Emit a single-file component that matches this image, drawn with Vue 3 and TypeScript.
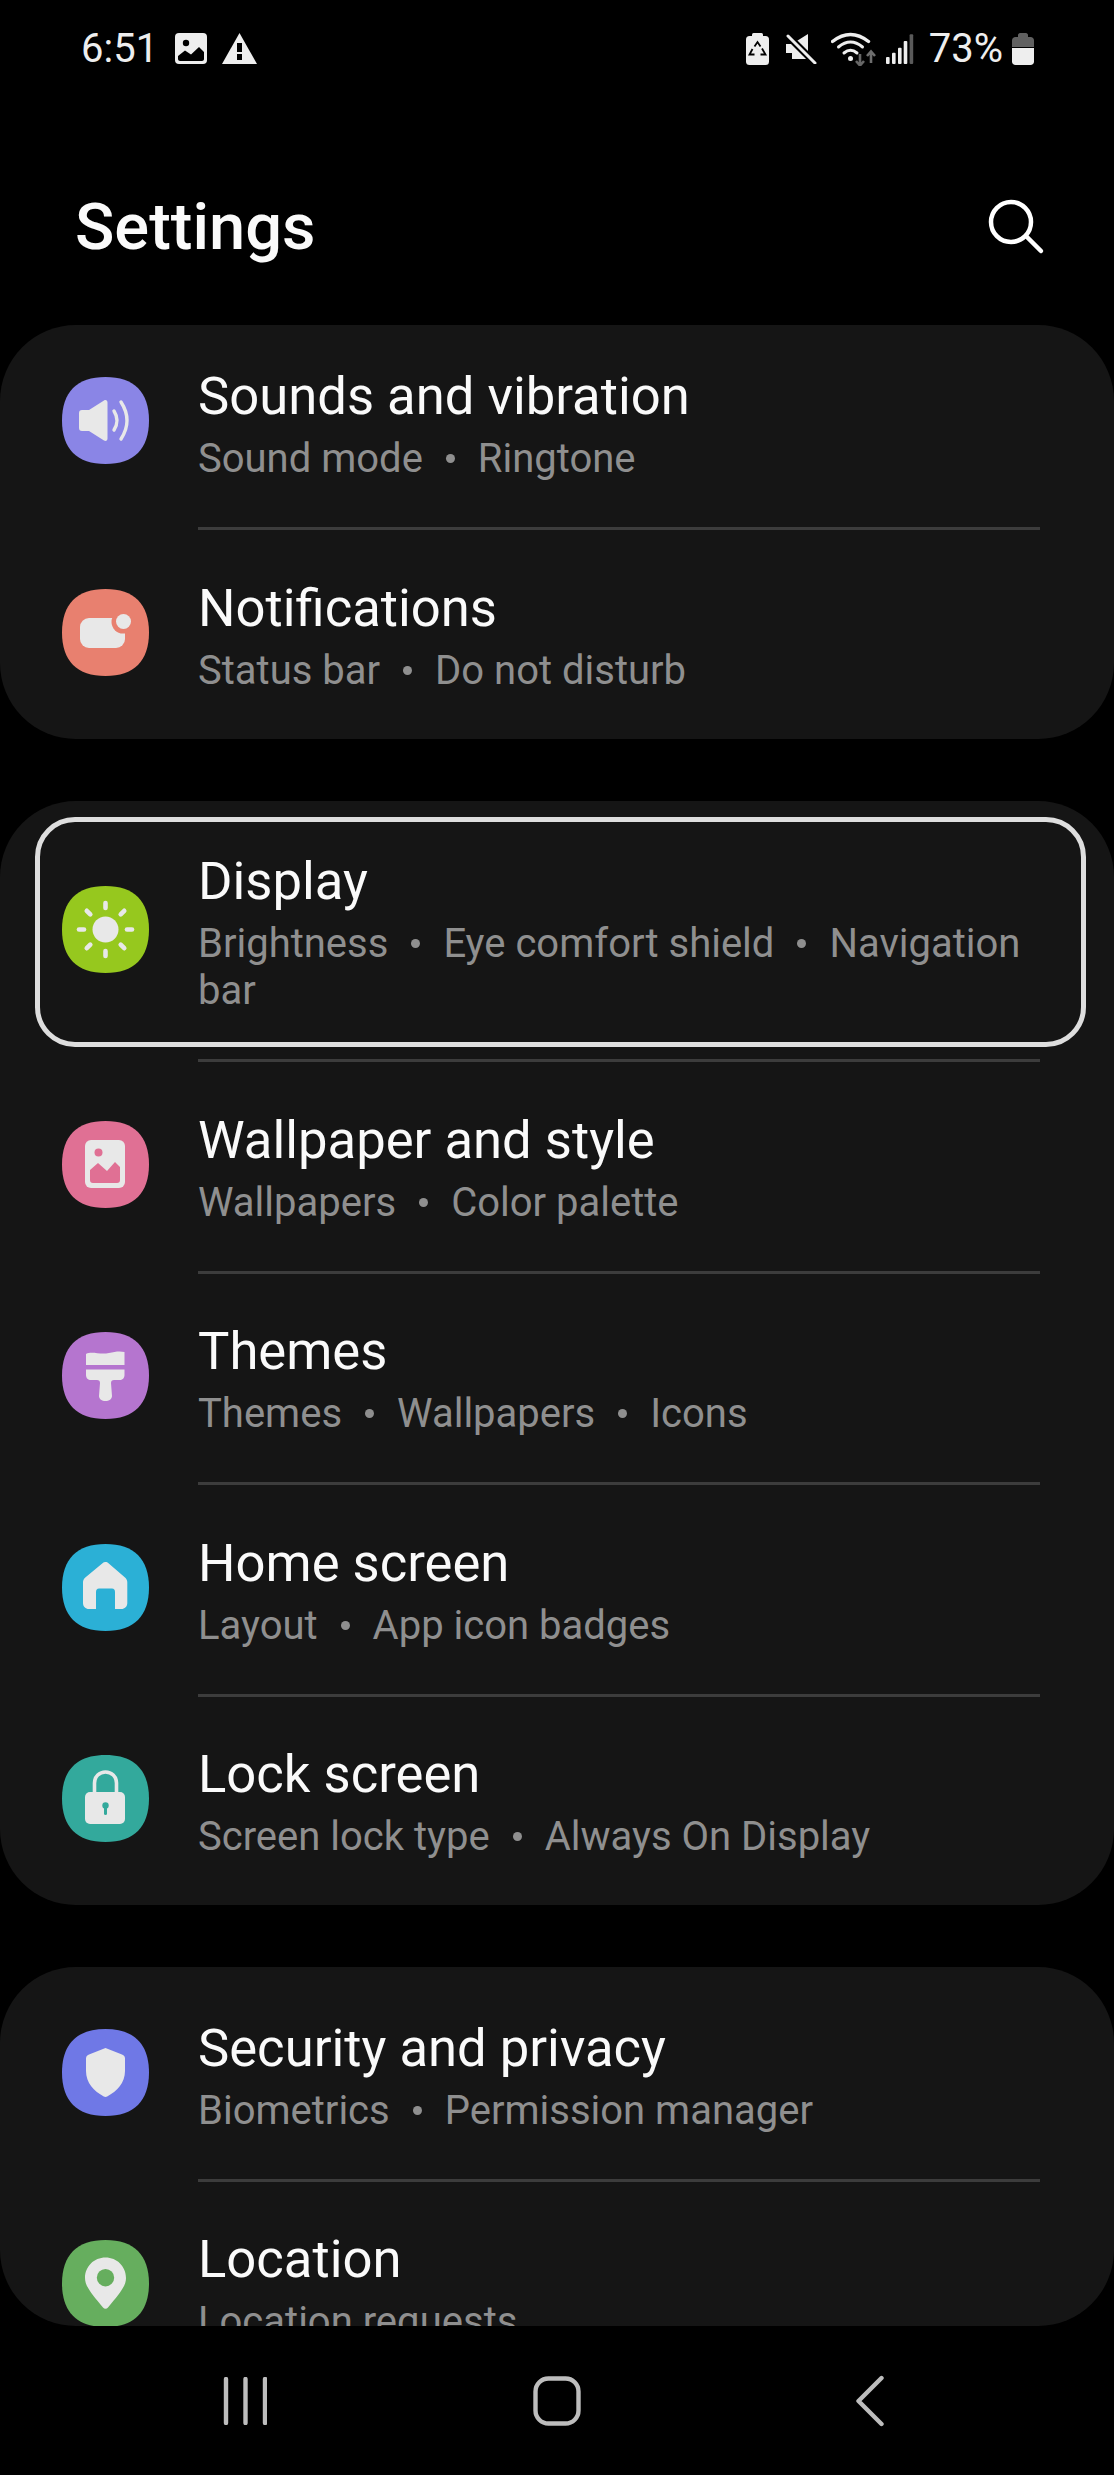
<template>
  <div class="phone">
    <!-- status bar -->
    <div class="status">
      <span class="clock">6:51</span>
      <svg class="st-image" width="32" height="31" viewBox="0 0 32 31">
        <rect width="32" height="31" rx="4" fill="#eee" />
        <circle cx="11" cy="10" r="3.2" fill="#000" />
        <path d="M3 23 L10 17.5 L16 21.5 L24 14 L29 19 V26 c0 1 -1 2 -2 2 H5 c-1 0 -2 -1 -2 -2 Z" fill="#000" />
      </svg>
      <svg class="st-warn" width="35" height="31" viewBox="0 0 35 31">
        <path d="M17.5 0 L35 31 H0 Z" fill="#eee" />
        <rect x="15" y="10" width="5" height="9" fill="#000" />
        <rect x="15" y="21" width="5" height="6" fill="#000" />
      </svg>
      <div class="status-right">
        <svg width="23" height="32" viewBox="0 0 23 32">
          <rect x="6" y="0" width="11" height="5" rx="1.5" fill="#eee" />
          <rect x="0" y="3" width="23" height="29" rx="3.5" fill="#eee" />
          <path d="M8.5 13.5 L11.5 9 L14.5 13.5 M16 15.5 L19.5 21.5 H14.5 M8.5 21.5 H3.5 L6.5 16" fill="none" stroke="#000" stroke-width="1.8" />
        </svg>
        <svg width="31" height="30" viewBox="0 0 31 30">
          <path d="M0 10 h6 L22 0 V25 H6 L6 19 H0 Z" fill="#eee" />
          <path d="M2 2 L29 29" stroke="#000" stroke-width="7" />
          <path d="M2 2 L29 29" stroke="#eee" stroke-width="3" stroke-linecap="round" />
        </svg>
        <svg width="45" height="34" viewBox="0 0 45 34">
          <g fill="none" stroke="#eee" stroke-linecap="round">
            <path d="M1.5 9.5 Q19.5 -4.5 37.5 9.5" stroke-width="3.4" />
            <path d="M7.5 15 Q19.5 5 31.5 15" stroke-width="3" />
            <path d="M13 21 Q19.5 15.5 26 21" stroke-width="3" />
          </g>
          <circle cx="19.5" cy="26.5" r="2.5" fill="#eee" />
          <path d="M29 22 V33 M25 29 L29 33.5 L33 29" fill="none" stroke="#666" stroke-width="2.6" />
          <path d="M40 31 V20 M36 24 L40 19.5 L44 24" fill="none" stroke="#6e6e6e" stroke-width="2.6" />
        </svg>
        <svg width="28" height="30" viewBox="0 0 28 30">
          <rect v-for="(bar, i) in signalBars" :key="i" :x="bar.x" :y="bar.y" width="3.6" :height="30 - bar.y" rx="1"
            :fill="i === 4 ? '#5a5a5a' : '#eee'" />
        </svg>
        <span class="pct">73%</span>
        <svg width="22" height="32" viewBox="0 0 22 32">
          <path d="M6 4 V2 c0 -1 1 -2 2 -2 h6 c1 0 2 1 2 2 V4 h2.5 c2 0 3.5 1.5 3.5 3.5 V14 H0 V7.5 C0 5.5 1.5 4 3.5 4 Z" fill="#606060" />
          <path d="M0 15 H22 V28.5 c0 2 -1.5 3.5 -3.5 3.5 H3.5 C1.5 32 0 30.5 0 28.5 Z" fill="#eee" />
        </svg>
      </div>
    </div>

    <!-- header -->
    <div class="header">
      <h1 class="title">Settings</h1>
      <svg class="search" width="60" height="60" viewBox="0 0 60 60">
        <circle cx="25" cy="25" r="20" fill="none" stroke="#fff" stroke-width="4.5" />
        <path d="M40 39 L55 54" stroke="#fff" stroke-width="4.5" stroke-linecap="round" />
      </svg>
    </div>

    <!-- list -->
    <div class="scroller">
      <section v-for="(group, g) in groups" :key="g" class="card" :class="{ 'card-first': g === 0 }">
        <template v-for="(item, i) in group" :key="item.title">
          <div class="row" :class="{ focused: item.focused }">
            <svg class="app-icon" width="87" height="87" viewBox="0 0 87 87">
              <path d="M43.5 0 C72 0 87 15 87 43.5 C87 72 72 87 43.5 87 C15 87 0 72 0 43.5 C0 15 15 0 43.5 0 Z" :fill="item.color" />
              <g v-if="item.icon === 'sound'">
                <path d="M20 33 h7 l15 -9.5 c2 -1 3.5 0 3.5 2 v36 c0 2 -1.5 3 -3.5 2 l-15 -9.5 h-7 c-2 0 -3 -1 -3 -3 v-15 c0 -2 1 -3 3 -3 Z" fill="#e8e8e8" />
                <path d="M52 34 Q58 43.5 52 53 M59 25 Q71 43.5 59 62" fill="none" stroke="#e8e8e8" stroke-width="3.4" stroke-linecap="round" />
              </g>
              <g v-else-if="item.icon === 'notify'">
                <rect x="18" y="29" width="45" height="30" rx="9" fill="#e8e8e8" />
                <circle cx="61" cy="33" r="11.5" :fill="item.color" />
                <circle cx="61.5" cy="32.5" r="7.5" fill="#e8e8e8" />
              </g>
              <g v-else-if="item.icon === 'sun'">
                <circle cx="43.5" cy="43.5" r="13" fill="#e8e8e8" />
                <path v-for="a in sunRays" :key="a" d="M43.5 22 V17" transform-origin="43.5 43.5" :transform="`rotate(${a})`"
                  stroke="#e8e8e8" stroke-width="4.6" stroke-linecap="round" />
              </g>
              <g v-else-if="item.icon === 'wallpaper'">
                <rect x="23" y="19" width="40" height="48" rx="6" fill="#e8e8e8" />
                <circle cx="36.5" cy="31.5" r="4" :fill="item.color" />
                <path d="M28 49 L36 42 L45 50 L53 41 L58 46 V59 c0 2 -1 3 -3 3 H31 c-2 0 -3 -1 -3 -3 Z" :fill="item.color" />
              </g>
              <g v-else-if="item.icon === 'theme'" fill="#e8e8e8">
                <path d="M24 22 C30 19 38 23 47 21 C53 19.5 58 19 62.5 20 V33 H24 Z" />
                <path d="M24 37.5 H62.5 V43 c0 3 -2 5 -5 5 H52 c-2 0 -3 1 -3 3 l1 13 c0 3 -3 5 -6.5 5 s-6.5 -2 -6.5 -5 l1 -13 c0 -2 -1 -3 -3 -3 H29 c-3 0 -5 -2 -5 -5 Z" />
              </g>
              <path v-else-if="item.icon === 'home'" fill="#e8e8e8"
                d="M43.5 18 c1.2 0 2.2 .5 3 1.2 L63 33.5 c1.5 1.3 2.3 3 2.3 5 v20.5 c0 3.5 -2.5 6 -6 6 H53 V48 c0 -2 -1 -3.5 -3 -3.5 H37 c-2 0 -3 1.5 -3 3.5 V65 H27 c-3.5 0 -6 -2.5 -6 -6 V38.5 c0 -2 .8 -3.7 2.3 -5 L40.5 19.2 c.8 -.7 1.8 -1.2 3 -1.2 Z" />
              <g v-else-if="item.icon === 'lock'">
                <path d="M32.5 38 V28 c0 -6.5 5 -11 11 -11 s11 4.5 11 11 V38" fill="none" stroke="#e8e8e8" stroke-width="3.6" />
                <rect x="23" y="37" width="40" height="32" rx="5" fill="#e8e8e8" />
                <circle cx="43.5" cy="50.5" r="3.2" :fill="item.color" />
                <rect x="42" y="51" width="3" height="9" rx="1.5" :fill="item.color" />
              </g>
              <path v-else-if="item.icon === 'shield'" fill="#e8e8e8"
                d="M43.5 19 L60 25.5 c2 .8 3 2 3 4 V42 c0 12 -8 20 -17.8 25.5 c-1 .6 -2.4 .6 -3.4 0 C32 62 24 54 24 42 V29.5 c0 -2 1 -3.2 3 -4 Z" />
              <g v-else-if="item.icon === 'pin'">
                <path d="M43.5 17.5 c11.5 0 20.5 9 20.5 20.5 c0 8 -6 15 -18 29.5 c-1.3 1.7 -3.7 1.7 -5 0 C29 53 23 46 23 38 c0 -11.5 9 -20.5 20.5 -20.5 Z" fill="#e8e8e8" />
                <circle cx="43.5" cy="37.7" r="8.7" :fill="item.color" />
              </g>
            </svg>
            <div class="text">
              <div class="row-title">{{ item.title }}</div>
              <div class="row-sub">
                <template v-for="(part, p) in item.parts" :key="p">
                  <span v-if="p > 0" class="dot"></span><span>{{ part }}</span>
                </template>
              </div>
            </div>
          </div>
          <div v-if="i < group.length - 1" class="divider"></div>
        </template>
      </section>
    </div>

    <!-- nav bar -->
    <div class="nav">
      <div class="nav-cell">
        <svg width="44" height="48" viewBox="0 0 44 48">
          <path d="M3 2 V46 M22.5 2 V46 M42 2 V46" stroke="#bdbdbd" stroke-width="4.4" stroke-linecap="round" />
        </svg>
      </div>
      <div class="nav-cell">
        <svg width="48" height="50" viewBox="0 0 48 50">
          <rect x="2.5" y="2.5" width="43" height="45" rx="13" fill="none" stroke="#bdbdbd" stroke-width="4.4" />
        </svg>
      </div>
      <div class="nav-cell">
        <svg width="30" height="52" viewBox="0 0 30 52">
          <path d="M27.5 3 L4.5 26 L27.5 49" fill="none" stroke="#bdbdbd" stroke-width="4.4" stroke-linecap="round" stroke-linejoin="round" />
        </svg>
      </div>
    </div>
  </div>
</template>

<script setup lang="ts">
interface Item {
  title: string
  parts: string[]
  icon: string
  color: string
  focused?: boolean
}

const signalBars = [
  { x: 0, y: 23 },
  { x: 6, y: 18.7 },
  { x: 12, y: 13.7 },
  { x: 17.7, y: 7 },
  { x: 23.6, y: 0.3 }
]

const sunRays = [0, 45, 90, 135, 180, 225, 270, 315]

const groups: Item[][] = [
  [
    { title: 'Sounds and vibration', parts: ['Sound mode', 'Ringtone'], icon: 'sound', color: '#8a85e6' },
    { title: 'Notifications', parts: ['Status bar', 'Do not disturb'], icon: 'notify', color: '#e8806f' }
  ],
  [
    { title: 'Display', parts: ['Brightness', 'Eye comfort shield', 'Navigation bar'], icon: 'sun', color: '#96c81e', focused: true },
    { title: 'Wallpaper and style', parts: ['Wallpapers', 'Color palette'], icon: 'wallpaper', color: '#e07094' },
    { title: 'Themes', parts: ['Themes', 'Wallpapers', 'Icons'], icon: 'theme', color: '#b575cf' },
    { title: 'Home screen', parts: ['Layout', 'App icon badges'], icon: 'home', color: '#2bb0d6' },
    { title: 'Lock screen', parts: ['Screen lock type', 'Always On Display'], icon: 'lock', color: '#33a99c' }
  ],
  [
    { title: 'Security and privacy', parts: ['Biometrics', 'Permission manager'], icon: 'shield', color: '#6f78e6' },
    { title: 'Location', parts: ['Location requests'], icon: 'pin', color: '#66ae5e' }
  ]
]
</script>

<style scoped>
.phone {
  width: 1114px;
  height: 2475px;
  display: flex;
  flex-direction: column;
  background: #000;
  font-family: Roboto, "Liberation Sans", sans-serif;
  overflow: hidden;
}

.status {
  height: 93px;
  padding: 2px 80px 0 81px;
  flex: none;
  display: flex;
  align-items: center;
  color: #eee;
  font-size: 40px;
}

.clock {
  width: 94px;
}

.st-warn {
  margin-left: 15px;
}

.status-right {
  margin-left: auto;
  display: flex;
  align-items: center;
}

.status-right svg:nth-child(1) {
  margin-right: 17px;
}

.status-right svg:nth-child(2) {
  margin-right: 14px;
}

.status-right svg:nth-child(3) {
  margin-right: 10px;
}

.status-right svg:nth-child(4) {
  margin-right: 15px;
}

.pct {
  margin-right: 9px;
}

.header {
  height: 196px;
  padding: 34px 68px 0 75px;
  flex: none;
  display: flex;
  align-items: center;
  justify-content: space-between;
}

.title {
  margin: 0;
  color: #fafafa;
  font-size: 65px;
  font-weight: 500;
}

.scroller {
  height: 2001px;
  flex: none;
  overflow: hidden;
  border-radius: 0 0 76px 76px;
}

.card {
  background: #151515;
  border-radius: 76px;
  padding: 3px 0 0;
  margin-bottom: 62px;
}

.card-first {
  padding-top: 0;
}

.card-first .row:first-child {
  padding-top: 34px;
}

.row {
  position: relative;
  display: flex;
  align-items: center;
  padding: 40.5px 74px 45px 62px;
}

.focused::after {
  content: "";
  position: absolute;
  left: 35px;
  right: 28px;
  top: 13px;
  height: 220px;
  border: 5px solid #dedede;
  border-radius: 40px;
}

.app-icon {
  flex: none;
  margin-right: 49px;
}

.text {
  flex: 1;
  min-width: 0;
}

.row-title {
  color: #fafafa;
  font-size: 52.6px;
  line-height: 75px;
}

.row-sub {
  margin-top: 1px;
  color: #8f8f8f;
  font-size: 40px;
  line-height: 47px;
}

.dot {
  display: inline-block;
  width: 9px;
  height: 9px;
  margin: 0 23px;
  border-radius: 50%;
  background: #8f8f8f;
  vertical-align: 0.22em;
}

.divider {
  height: 3px;
  margin: 0 74px 0 198px;
  background: #3c3c3c;
}

.nav {
  flex: 1;
  display: flex;
  justify-content: center;
  align-items: center;
}

.nav-cell {
  width: 312px;
  display: flex;
  justify-content: center;
}
</style>

<style>
html,
body {
  background: #000;
}
</style>
